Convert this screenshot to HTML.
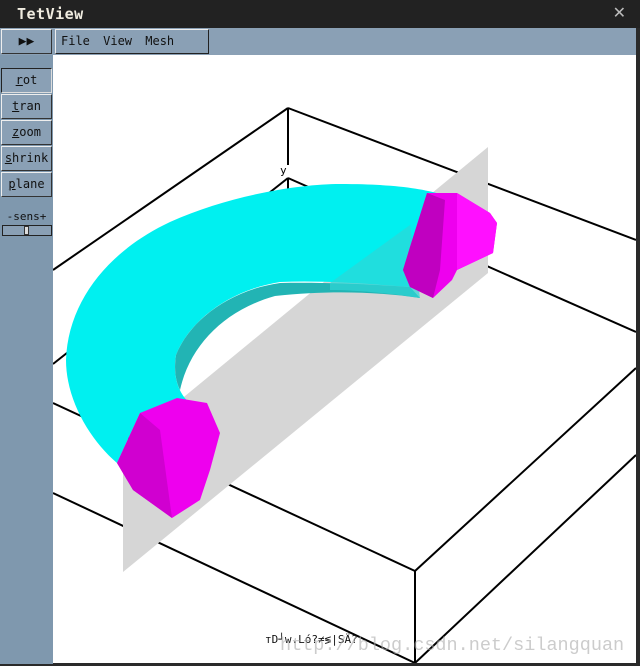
<!DOCTYPE html>
<html><head><meta charset="utf-8"><style>
*{margin:0;padding:0;box-sizing:border-box}
body{width:640px;height:666px;background:#2a2a2a;position:relative;overflow:hidden;font-family:"DejaVu Sans Mono","Liberation Mono",monospace}
.title{position:absolute;left:0;top:0;width:640px;height:28px;background:#222;color:#f0ece0;font:bold 15px "DejaVu Sans Mono",monospace;padding:5px 0 0 17px;letter-spacing:0.5px}
.x{position:absolute;right:14px;top:3px;color:#bbb;font:bold 16px "DejaVu Sans",sans-serif}
.bar{position:absolute;left:0;top:28px;width:636px;height:27px;background:#8aa0b5}
.left{position:absolute;left:0;top:55px;width:53px;height:609px;background:#7f98ae}
.btn{position:absolute;left:1px;width:51px;height:25px;background:#8aa0b5;border:1px solid #333;border-top-color:#eee;border-left-color:#eee;font-size:12px;text-align:center;line-height:23px;color:#111}
.btn.p{border-color:#222;border-right-color:#ddd;border-bottom-color:#ddd}
.menu{position:absolute;left:55px;top:29px;width:154px;height:25px;border:1px solid #222;border-top-color:#eee;border-left-color:#eee;font-size:12px;line-height:23px;padding-left:5px;color:#111;word-spacing:6px}
.canvas{position:absolute;left:53px;top:55px;width:583px;height:608px;background:#fff;overflow:hidden}
</style></head><body>
<div class="title">TetView</div><div class="x">✕</div>
<div class="bar"></div>
<div class="btn" style="top:29px;font-size:13px;font-weight:bold">▶▶</div>
<div class="menu">File View Mesh</div>
<div class="left"></div>
<div class="btn p" style="top:68px"><u>r</u>ot</div>
<div class="btn" style="top:94px"><u>t</u>ran</div>
<div class="btn" style="top:120px"><u>z</u>oom</div>
<div class="btn" style="top:146px"><u>s</u>hrink</div>
<div class="btn" style="top:172px"><u>p</u>lane</div>
<div style="position:absolute;left:0;top:210px;width:53px;text-align:center;font-size:11px;color:#111">-sens+</div>
<div style="position:absolute;left:2px;top:225px;width:50px;height:11px;border:1px solid #222;background:#8aa0b5"></div>
<div style="position:absolute;left:24px;top:226px;width:5px;height:9px;background:#ddd;border:1px solid #333"></div>
<div class="canvas">
<svg width="583" height="608" viewBox="53 55 583 608" xmlns="http://www.w3.org/2000/svg">
<g stroke="#000" stroke-width="2" fill="none">
<line x1="53" y1="270" x2="288" y2="108"/>
<line x1="288" y1="108" x2="636" y2="240"/>
<line x1="288" y1="108" x2="288" y2="165"/>
<line x1="288" y1="178" x2="288" y2="190"/>
<line x1="53" y1="364" x2="288" y2="178"/>
<line x1="288" y1="178" x2="636" y2="332"/>
<line x1="53" y1="403" x2="415" y2="571"/>
<line x1="415" y1="571" x2="636" y2="368"/>
<line x1="415" y1="571" x2="415" y2="663"/>
<line x1="53" y1="493" x2="415" y2="663"/>
<line x1="415" y1="663" x2="636" y2="455"/>
</g>
<text x="280" y="174" font-size="11" font-family="DejaVu Sans Mono">y</text>
<polygon points="488,147 488,273 123,572 123,447" fill="#d6d6d6"/>
<path d="M117,463 C90,440 66,400 66,360 C68,300 110,250 170,222 C230,195 300,184 340,184 C390,184 420,188 440,194 L410,287 C380,285 330,280 280,282 C230,290 190,320 176,355 C172,380 180,400 200,410 L140,413 Z" fill="#00f0f0"/>
<path d="M410,287 C380,285 330,282 280,283 C230,290 190,320 176,355 C174,368 175,380 180,390 C190,345 225,310 275,296 C330,290 380,292 420,298 Z" fill="#22b4b4"/>
<path d="M330,283 L410,225 L420,298 C380,292 350,290 330,290 Z" fill="#2ed6d6" opacity="0.7"/>
<polygon points="117,463 140,413 177,398 207,403 220,433 210,470 200,500 172,518 133,490" fill="#ee00ee"/>
<polygon points="117,463 140,413 160,430 172,518 133,490" fill="#d000d0"/>
<polygon points="410,247 427,193 457,193 490,213 497,223 493,253 457,270 452,280 433,298 410,287 403,270" fill="#ee00ee"/>
<polygon points="410,247 427,193 445,200 440,270 433,298 410,287 403,270" fill="#c000c0"/>
<polygon points="457,193 490,213 497,223 493,253 457,270" fill="#ff10ff"/>
</svg>
<div style="position:absolute;left:212px;top:578px;font-size:11px;color:#111">ᴛD┘w.Ló?≠≶|SÄ?</div>
<div style="position:absolute;left:227px;top:580px;font:18.5px 'Liberation Mono',monospace;color:rgba(170,170,170,0.6)">http://blog.csdn.net/silangquan</div>
</div>
</body></html>
